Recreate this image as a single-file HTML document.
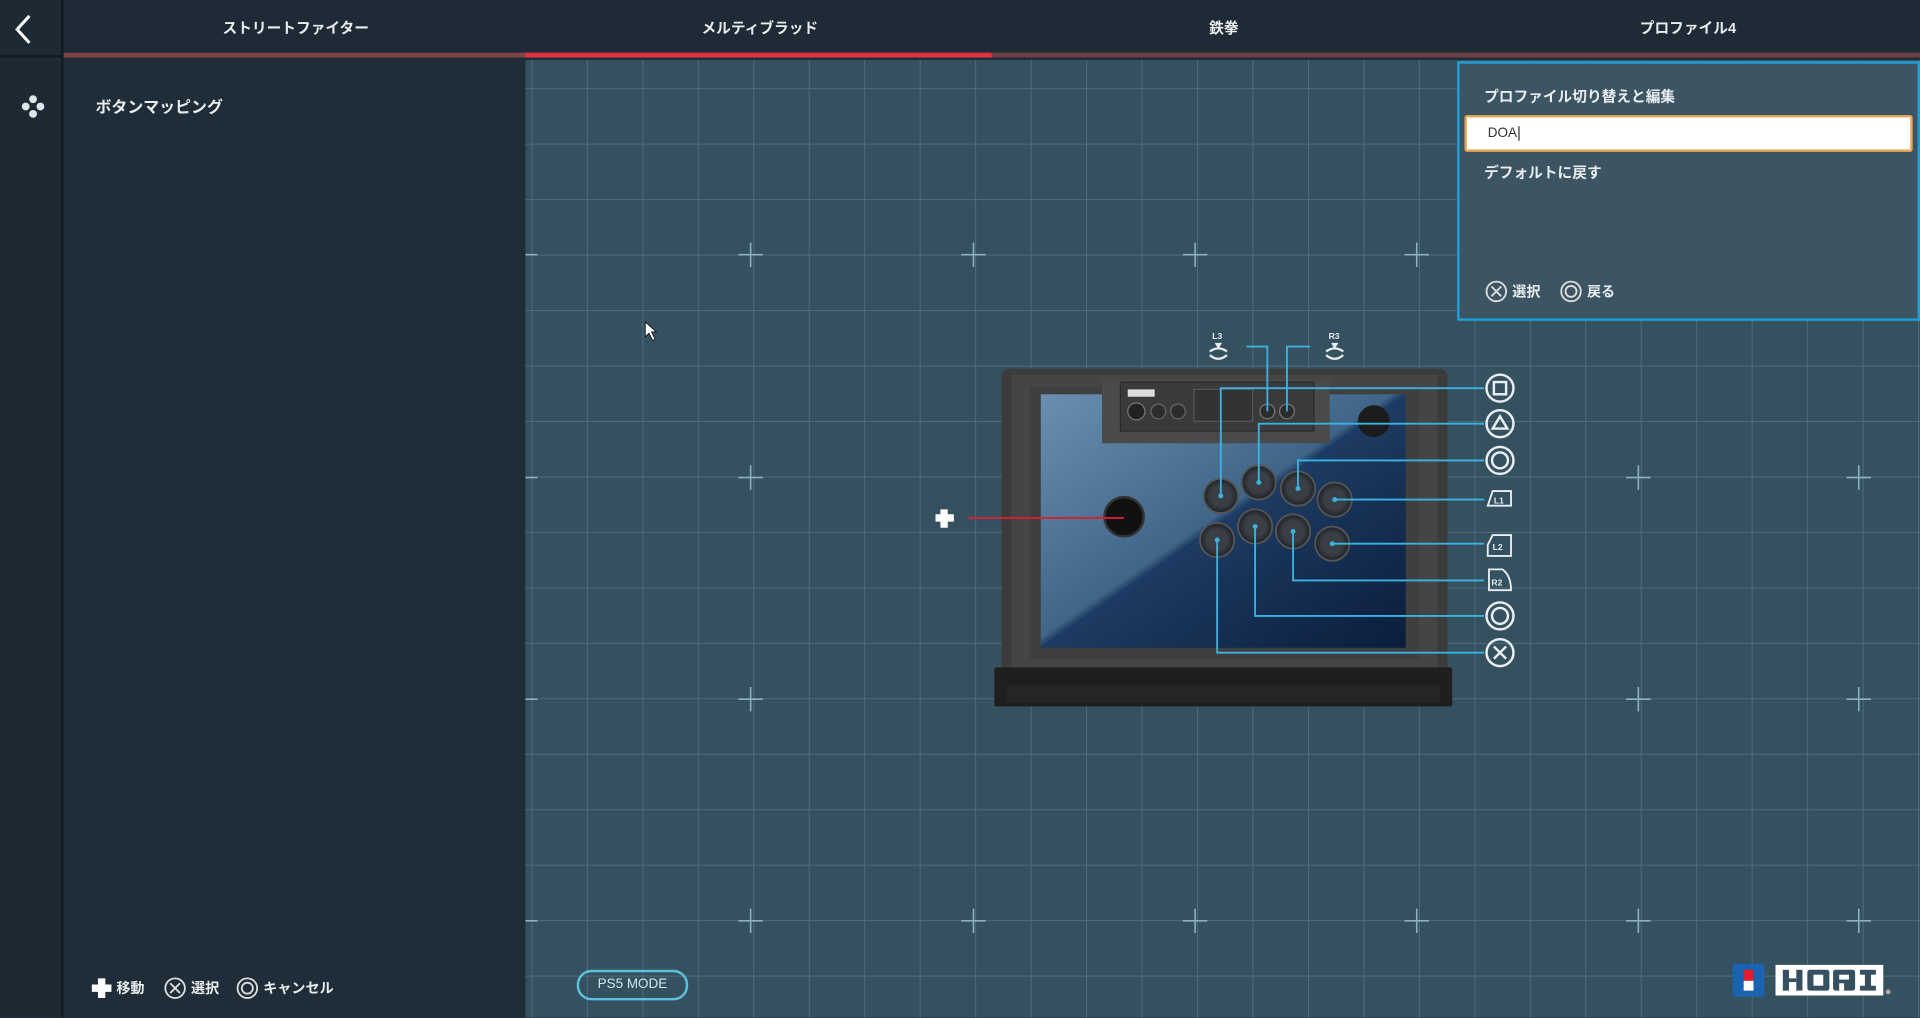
<!DOCTYPE html>
<html><head><meta charset="utf-8"><style>
html,body{margin:0;padding:0;width:1920px;height:1017px;overflow:hidden;background:#1f2d38}
#w{position:absolute;left:0;top:0;width:1568px;height:831px;transform:scale(1.22449);transform-origin:0 0;font-family:"Liberation Sans","Noto Sans CJK JP",sans-serif;color:#e8edf0}
.abs{position:absolute}
#rail{left:0;top:0;width:50px;height:831px;background:#1d2933;border-right:2px solid #121a21}
#hdr{left:52px;top:0;width:1516px;height:45px;background:#1e2a35}
.tab{position:absolute;top:14px;font-size:12px;font-weight:bold;width:379px;text-align:center}
#lp{left:52px;top:49px;width:377px;height:782px;background:#1f2d38}
#grid{left:429px;top:49px;width:1139px;height:782px;background-color:#35515f;
background-image:linear-gradient(90deg,#4d6c79 1px,transparent 1px),linear-gradient(#4d6c79 1px,transparent 1px);
background-size:45.3px 45.3px;background-position:5px 23px}
#pop{left:1190px;top:50px;width:374px;height:208px;background:#3d5563;border:2px solid #1e9fd6}
</style></head><body><div id="w">
<div class="abs" id="grid"></div>
<svg class="abs" style="left:0;top:0" width="1568" height="831">
<g stroke="#8fb0be" stroke-width="1.3">
<path d="M603 208h20M613 198v20M785 208h20M795 198v20M966 208h20M976 198v20M1147 208h20M1157 198v20M1328 208h20M1338 198v20M1508 208h20M1518 198v20
M603 390h20M613 380v20M1328 390h20M1338 380v20M1508 390h20M1518 380v20M429 390h10M429 208h10
M603 571h20M613 561v20M1328 571h20M1338 561v20M1508 571h20M1518 561v20M429 571h10
M603 752h20M613 742v20M785 752h20M795 742v20M966 752h20M976 742v20M1147 752h20M1157 742v20M1328 752h20M1338 742v20M1508 752h20M1518 742v20M429 752h10"/>
</g>
<!-- controller -->
<defs><linearGradient id="bg" x1="0" y1="0" x2="1" y2="1"><stop offset="0" stop-color="#6a8fb0"/><stop offset="0.48" stop-color="#3f6588"/><stop offset="0.5" stop-color="#1d3b62"/><stop offset="1" stop-color="#0b1d3c"/></linearGradient>
<radialGradient id="btn"><stop offset="0.6" stop-color="#3a3f45"/><stop offset="1" stop-color="#1e2226"/></radialGradient></defs>
<rect x="818" y="301" width="364" height="258" rx="6" fill="#3b3b3b"/>
<rect x="826" y="306" width="348" height="248" fill="#454545"/>
<rect x="841" y="316" width="318" height="222" fill="#3f3f3f"/>
<rect x="850" y="322" width="298" height="207" fill="url(#bg)"/>
<rect x="900" y="310" width="186" height="52" fill="#4a4a4a"/>
<rect x="915" y="312" width="158" height="40" fill="#3a3a3a" stroke="#2a2a2a"/>
<rect x="975" y="318" width="48" height="26" fill="#333" stroke="#555"/>
<circle cx="928" cy="336" r="7" fill="#222" stroke="#777"/><circle cx="946" cy="336" r="6" fill="#2c2c2c" stroke="#666"/><circle cx="962" cy="336" r="6" fill="#2c2c2c" stroke="#666"/>
<rect x="921" y="318" width="22" height="6" fill="#ddd"/>
<circle cx="1035" cy="336" r="6" fill="#2c2c2c" stroke="#777"/><circle cx="1051" cy="336" r="6" fill="#2c2c2c" stroke="#777"/>
<circle cx="1122" cy="344" r="13" fill="#1c1c1c"/>
<rect x="812" y="545" width="374" height="32" rx="2" fill="#1f1f1f"/>
<rect x="822" y="560" width="354" height="14" fill="#262626"/>
<circle cx="918" cy="422" r="16" fill="#111" stroke="#333" stroke-width="2"/>
<g fill="url(#btn)" stroke="#555" stroke-width="1.5">
<circle cx="997" cy="405" r="14"/><circle cx="1028" cy="394" r="14"/><circle cx="1060" cy="399" r="14"/><circle cx="1090" cy="408" r="14"/>
<circle cx="994" cy="441" r="14"/><circle cx="1025" cy="430" r="14"/><circle cx="1056" cy="434" r="14"/><circle cx="1088" cy="444" r="14"/></g>
<path d="M790 423H918" stroke="#d42030" stroke-width="1.5"/>
<g stroke="#3ab3e0" stroke-width="1.5" fill="none">
<path d="M997 405V317H1212M1028 394V346H1212M1060 399V376H1212M1090 408H1212M1088 444H1212M1056 434V474H1212M1025 430V503H1212M994 441V533H1212M1035 336V283H1018M1051 336V283H1070"/></g>
<g fill="#3ab3e0"><circle cx="997" cy="405" r="2"/><circle cx="1028" cy="394" r="2"/><circle cx="1060" cy="399" r="2"/><circle cx="1090" cy="408" r="2"/><circle cx="1088" cy="444" r="2"/><circle cx="1056" cy="434" r="2"/><circle cx="1025" cy="430" r="2"/><circle cx="994" cy="441" r="2"/></g>
<path d="M764 423h15M771 416v15" stroke="#fff" stroke-width="6"/>
<g stroke="#e8eef2" stroke-width="2" fill="none">
<circle cx="1225" cy="317" r="11"/><rect x="1220" y="312" width="10" height="10"/>
<circle cx="1225" cy="346" r="11"/><path d="M1225 340l6 10h-12z"/>
<circle cx="1225" cy="376" r="11"/><circle cx="1225" cy="376" r="6.5"/>
<circle cx="1225" cy="503" r="11"/><circle cx="1225" cy="503" r="6.5"/>
<circle cx="1225" cy="533" r="11"/><path d="M1220 528l10 10M1230 528l-10 10"/>
<path d="M1219 401h15v12h-19z" stroke-width="1.5"/><path d="M1219 437h15v17h-19v-9z" stroke-width="1.5"/><path d="M1216 465h11q7 5 7 17h-18z" stroke-width="1.5"/>
<path d="M988 290q7 6 14 0M988 287q7 -5 14 0" stroke-width="1.8"/><path d="M1083 290q7 6 14 0M1083 287q7 -5 14 0" stroke-width="1.8"/></g>
<g font-size="7" font-weight="bold" fill="#e8eef2" font-family="Liberation Sans"><text x="1220" y="411">L1</text><text x="1219" y="449">L2</text><text x="1218" y="478">R2</text><text x="990" y="277">L3</text><text x="1085" y="277">R3</text></g>
<path d="M992 280l3 5 3-5zM1087 280l3 5 3-5z" fill="#e8eef2"/>
<!-- hori logo -->
<rect x="1415" y="787" width="26" height="27" fill="#1a63b0"/><rect x="1424" y="792" width="8" height="9" fill="#e31c2e"/><rect x="1424" y="801" width="8" height="8" fill="#fff"/>
<rect x="1450" y="788" width="88" height="25" fill="#fff"/>
<g fill="#35515f"><rect x="1456" y="792" width="5" height="17"/><rect x="1467" y="792" width="5" height="17"/><rect x="1461" y="799" width="6" height="3"/><rect x="1476" y="792" width="18" height="17" rx="2"/><rect x="1497" y="792" width="18" height="17" rx="2"/><rect x="1519" y="792" width="13" height="17"/></g>
<g fill="#fff"><rect x="1481" y="796" width="8" height="9"/><rect x="1502" y="796" width="8" height="4"/><rect x="1502" y="803" width="4" height="6"/><rect x="1519" y="796" width="4" height="9"/><rect x="1528" y="796" width="4" height="9"/></g>
<circle cx="1542" cy="810" r="2" fill="#aaa"/>
<path d="M527 263v12l3-3 3 6 2-1-3-6h4z" fill="#fff" stroke="#000" stroke-width=".6"/>
</svg>
<div class="abs" id="rail"></div>
<svg class="abs" style="left:0;top:0" width="52" height="100"><path d="M24 13l-10 11 10 11" stroke="#fff" stroke-width="2.5" fill="none"/><path d="M0 46h50" stroke="#121a21" stroke-width="2"/>
<g fill="#dfe6ea"><circle cx="27" cy="81" r="3.2"/><circle cx="27" cy="93" r="3.2"/><circle cx="21" cy="87" r="3.2"/><circle cx="33" cy="87" r="3.2"/></g></svg>
<div class="abs" id="hdr">
<div class="tab" style="left:0">ストリートファイター</div><div class="tab" style="left:379px">メルティブラッド</div><div class="tab" style="left:758px">鉄拳</div><div class="tab" style="left:1137px">プロファイル4</div>
<div class="abs" style="left:0;top:43px;width:377px;height:4px;background:#7e4249"></div>
<div class="abs" style="left:377px;top:43px;width:381px;height:4px;background:#e2323f"></div>
<div class="abs" style="left:758px;top:43px;width:758px;height:4px;background:#6c3e45"></div>
</div>
<div class="abs" id="lp"><div class="abs" style="left:26px;top:28px;font-size:13px;font-weight:bold">ボタンマッピング</div>
<div class="abs" style="left:22px;top:749px;font-size:11.5px;font-weight:bold;display:flex;align-items:center;white-space:nowrap">
<svg width="18" height="18"><path d="M1 9h16M9 1v16" stroke="#fff" stroke-width="6"/></svg><span style="margin:0 16px 0 3px">移動</span>
<svg width="18" height="18"><circle cx="9" cy="9" r="8" stroke="#ddd" stroke-width="1.5" fill="none"/><path d="M5 5l8 8M13 5l-8 8" stroke="#ddd" stroke-width="1.5"/></svg><span style="margin:0 14px 0 4px">選択</span>
<svg width="18" height="18"><circle cx="9" cy="9" r="8" stroke="#ddd" stroke-width="1.5" fill="none"/><circle cx="9" cy="9" r="4.5" stroke="#ddd" stroke-width="1.5" fill="none"/></svg><span style="margin-left:4px">キャンセル</span></div></div>
<div class="abs" style="left:471px;top:792px;width:87px;height:21px;border:2px solid #5cc1de;border-radius:12px;font-size:11px;color:#cfe6ef;text-align:center;line-height:21px">PS5 MODE</div>
<div class="abs" id="pop">
<div class="abs" style="left:20px;top:18px;font-size:12px;font-weight:bold">プロファイル切り替えと編集</div>
<div class="abs" style="left:4px;top:42px;width:362px;height:26px;background:#fff;border:2px solid #e6a95a;border-radius:2px;color:#333;font-size:11px;line-height:26px;padding-left:0"><span style="margin-left:17px">DOA</span><span style="border-left:1px solid #333;margin-left:1px"></span></div>
<div class="abs" style="left:20px;top:80px;font-size:12px;font-weight:bold">デフォルトに戻す</div>
<div class="abs" style="left:21px;top:177px;font-size:11.5px;font-weight:bold;display:flex;align-items:center">
<svg width="18" height="18"><circle cx="9" cy="9" r="8" stroke="#ddd" stroke-width="1.5" fill="none"/><path d="M5 5l8 8M13 5l-8 8" stroke="#ddd" stroke-width="1.5"/></svg><span style="margin:0 16px 0 4px">選択</span>
<svg width="18" height="18"><circle cx="9" cy="9" r="8" stroke="#ddd" stroke-width="1.5" fill="none"/><circle cx="9" cy="9" r="4.5" stroke="#ddd" stroke-width="1.5" fill="none"/></svg><span style="margin-left:4px">戻る</span></div>
</div>
</div></body></html>
